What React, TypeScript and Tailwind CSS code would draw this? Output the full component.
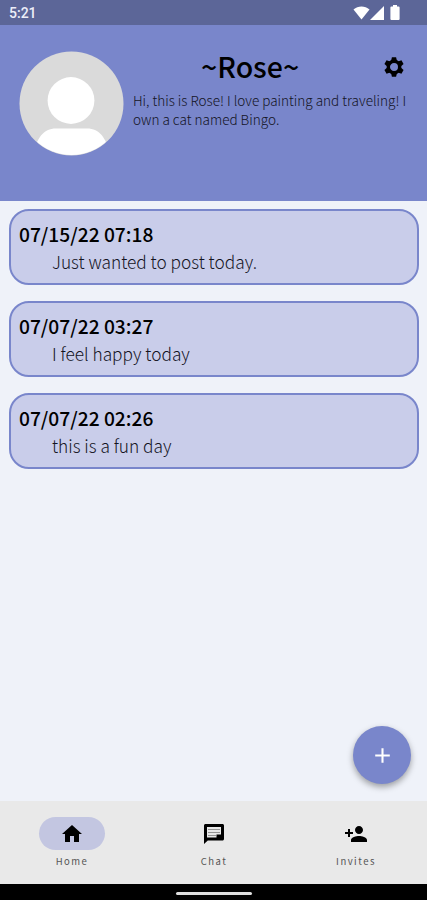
import React from 'react'
import { MdAdd, MdHome, MdPersonAdd } from 'react-icons/md'

interface Post {
  date: string
  text: string
}

const posts: Post[] = [
  { date: '07/15/22 07:18', text: 'Just wanted to post today.' },
  { date: '07/07/22 03:27', text: 'I feel happy today' },
  { date: '07/07/22 02:26', text: 'this is a fun day' },
]

const GearIcon: React.FC<{ className?: string }> = ({ className }) => (
  <svg className={className} viewBox="0 0 24 24">
    <circle cx="12" cy="12" r="5.700" fill="none" stroke="currentColor" strokeWidth="3.400" />
    <g fill="currentColor">
      {[0, 60, 120, 180, 240, 300].map((angle) => (
        <path key={angle} d="M9.900 2.200h4.200l.8 3.600H9.100Z" transform={`rotate(${angle} 12 12)`} />
      ))}
    </g>
  </svg>
)

const ChatIcon: React.FC<{ className?: string }> = ({ className }) => (
  <svg className={className} viewBox="0 0 24 24">
    <path
      d="M20.500 2h-17c-.8 0-1.500.7-1.500 1.500V22l3.800-3.500h14.700c.8 0 1.500-.7 1.500-1.500V3.500c0-.8-.7-1.500-1.500-1.500ZM19 12.500h-4.500V15.500H5V5h14Z"
      fill="currentColor"
    />
    <path d="M6 7.500h12M6 10.500h12M6 13.500h8" stroke="currentColor" strokeWidth="0.900" opacity="0.4" />
  </svg>
)

const tabs = [
  { label: 'Home', icon: MdHome, active: true },
  { label: 'Chat', icon: ChatIcon, active: false },
  { label: 'Invites', icon: MdPersonAdd, active: false },
]

const StatusBar: React.FC = () => (
  <div className="flex h-[25px] shrink-0 items-center justify-between bg-[#5c6698] pr-[27px] pl-[9px] text-white">
    <span className="font-['Roboto'] text-[14px] leading-none font-medium text-[#eceef8]">5:21</span>
    <div className="flex items-center">
      <svg className="h-[14px] w-[17px]" viewBox="0 0 17 14" fill="currentColor">
        <path d="M8.5 13.5 0.5 3.5C5 -0.5 12 -0.5 16.5 3.5Z" />
      </svg>
      <svg className="h-[14px] w-[14px]" viewBox="0 0 14 14" fill="currentColor">
        <path d="M14 0V14H0Z" />
      </svg>
      <svg className="ml-[6px] h-[15px] w-[10px]" viewBox="0 0 10 15" fill="currentColor">
        <path d="M3 0h4v1.6h1.600a1 1 0 0 1 1 1V14a1 1 0 0 1-1 1H1.4a1 1 0 0 1-1-1V2.600a1 1 0 0 1 1-1H3Z" />
      </svg>
    </div>
  </div>
)

const Avatar: React.FC = () => (
  <svg className="size-[105px] shrink-0" viewBox="0 0 105 105">
    <defs>
      <clipPath id="avatar">
        <circle cx="52.5" cy="52.5" r="51.500" />
      </clipPath>
    </defs>
    <circle cx="52.5" cy="52.5" r="52" fill="#dadada" />
    <circle cx="52" cy="49.5" r="23.400" fill="#fff" />
    <path d="M14 105C17 88 24 77.500 37 77.500H68C81 77.500 88 88 91 105Z" fill="#fff" clipPath="url(#avatar)" />
  </svg>
)

const PostCard: React.FC<Post> = ({ date, text }) => (
  <div className="h-[76px] rounded-[20px] border-2 border-[#7986cb] bg-[#c9cdea] pt-[8px] pl-[8px]">
    <h2 className="text-[19.2px] leading-[30px] font-medium whitespace-nowrap text-black">{date}</h2>
    <p className="pl-[33px] text-[17.3px] leading-[26px] font-light whitespace-nowrap text-[#14141f]">{text}</p>
  </div>
)

export default function App() {
  return (
    <div className="flex h-[900px] w-[427px] flex-col overflow-hidden bg-[#eff2f9] font-['Noto_Sans_CJK_SC','Noto_Sans',sans-serif]">
      <StatusBar />

      <header className="flex h-[176px] shrink-0 bg-[#7986cb] pt-[26px] pl-[19px]">
        <Avatar />
        <div className="ml-[9px] flex-1">
          <div className="flex h-[33px] items-center">
            <h1 className="-mt-[4px] ml-[68px] w-[99px] text-[28.5px] leading-[33px] font-medium whitespace-nowrap text-black">~Rose~</h1>
            <button className="-mt-[2px] ml-[82px]">
              <GearIcon className="size-[24px] text-black" />
            </button>
          </div>
          <p className="mt-[7px] text-[13.55px] leading-[19px] font-light whitespace-nowrap text-[#14141f]">
            Hi, this is Rose! I love painting and traveling! I
            <br />
            own a cat named Bingo.
          </p>
        </div>
      </header>

      <main className="relative flex flex-1 flex-col gap-[16px] pt-[8px] pr-[8px] pl-[9px]">
        {posts.map((post) => (
          <PostCard key={post.date} {...post} />
        ))}
        <button className="absolute right-[16px] bottom-[17px] flex size-[58px] items-center justify-center rounded-full bg-[#7986cb] shadow-[0_3px_6px_rgba(0,0,0,0.35)]">
          <MdAdd className="size-[25px] text-white" />
        </button>
      </main>

      <nav className="grid h-[83px] shrink-0 grid-cols-3 bg-[#e9e9e9] pl-px">
        {tabs.map(({ label, icon: Icon, active }) => (
          <div key={label} className="flex flex-col items-center pt-[16px]">
            <div className={`flex h-[33px] w-[66px] items-center justify-center rounded-full ${active ? 'bg-[#c3c6e1]' : ''}`}>
              <Icon className="size-[24px] text-black" />
            </div>
            <span className="mt-[4px] text-[9.5px] leading-[15px] tracking-[1.5px] text-[#555]">{label}</span>
          </div>
        ))}
      </nav>

      <div className="flex h-[16px] shrink-0 justify-center bg-black pt-[8px]">
        <div className="h-[3px] w-[76px] rounded-full bg-[#dedede]" />
      </div>
    </div>
  )
}
